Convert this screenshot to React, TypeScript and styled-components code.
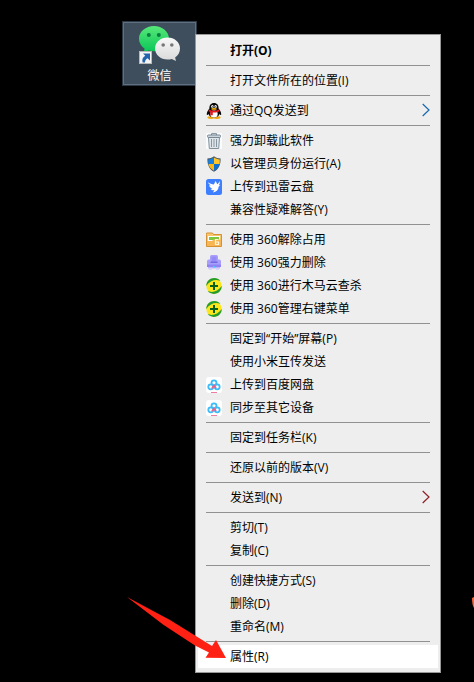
import React from "react";
import styled, { createGlobalStyle, css } from "styled-components";

const GlobalStyle = createGlobalStyle`
  * { box-sizing: border-box; }
  body {
    margin: 0;
    background: #000;
    font-family: "Open Sans", "Noto Sans CJK SC", sans-serif;
    font-size: 12px;
  }
`;

const Desktop = styled.main`
  position: relative;
  display: flex;
  align-items: flex-start;
  min-height: 100vh;
  padding: 21px 33px 9px 122px;
  overflow: hidden;
  background: #000;
`;

const Shortcut = styled.button`
  display: flex;
  flex: 0 0 75px;
  flex-direction: column;
  align-items: center;
  gap: 3px;
  height: 65px;
  padding: 3px 0 0;
  border: 2px solid #607080;
  outline: 1px solid #2b3947;
  outline-offset: -1px;
  background: #3f4e5d;
  color: #fff;
  font: inherit;
  line-height: 16px;
`;

const Menu = styled.ul`
  position: relative;
  flex: 1 1 auto;
  margin: 13px 0 0 -2px;
  padding: 4px 2px;
  border: 1px solid #989898;
  background: #eee;
  list-style: none;
`;

const Separator = styled.li`
  height: 1px;
  margin: 3px 8px;
  background: #919191;
`;

const Row = styled.li`
  position: relative;
`;

const Item = styled.button<{ $bold?: boolean; $active?: boolean }>`
  display: flex;
  align-items: center;
  gap: 8px;
  width: 100%;
  height: 23px;
  padding: 0 8px;
  border: 0;
  background: ${(p) => (p.$active ? "#fff" : "transparent")};
  color: #000;
  font: inherit;
  line-height: 18px;
  text-align: left;
  white-space: nowrap;
  ${(p) =>
    p.$bold &&
    css`
      font-weight: 700;
    `}
  &:hover {
    background: #fff;
  }
`;

const IconSlot = styled.span`
  display: flex;
  flex: 0 0 16px;
  height: 16px;
`;

const Label = styled.span`
  flex: 1;
`;

const Pointer = styled.svg`
  position: absolute;
  right: 100%;
  bottom: 0;
  margin: 0 -29px 4px 0;
  pointer-events: none;
`;

const EdgeMark = styled.svg`
  position: absolute;
  top: 597px;
  right: 0;
`;

const WeChat = () => (
  <svg width="41" height="39" viewBox="0 0 41 39" aria-hidden="true">
    <defs>
      <linearGradient id="wg" x1="0" y1="0" x2="0" y2="1">
        <stop offset="0" stopColor="#57e879" />
        <stop offset="1" stopColor="#06c556" />
      </linearGradient>
      <linearGradient id="ww" x1="0" y1="0" x2="0" y2="1">
        <stop offset="0" stopColor="#f8f8f8" />
        <stop offset="1" stopColor="#d9d9d9" />
      </linearGradient>
    </defs>
    <path d="M15 0C6.700 0 0 5.600 0 12.700c0 4 2.200 7.500 5.600 9.900L4.600 27l5.100-2.600c1.700.5 3.400.8 5.300.8 8.300 0 15-5.600 15-12.500S23.300 0 15 0z" fill="url(#wg)" />
    <circle cx="9.800" cy="9" r="2" fill="#087f3d" />
    <circle cx="19.800" cy="9" r="2" fill="#087f3d" />
    <path d="M28.500 11.500C21.500 11.500 16 16.300 16 22.500s5.500 11 12.500 11c1.600 0 3-.2 4.300-.6l4.200 2.200-.9-3.600c3-2 4.900-5.300 4.900-9 0-6.200-5.500-11-12.500-11z" fill="url(#ww)" />
    <circle cx="24.200" cy="19" r="1.800" fill="#777" />
    <circle cx="32.800" cy="19" r="1.800" fill="#777" />
    <rect x=".5" y="25.500" width="12" height="12" fill="#f4f4f4" stroke="#b9b9b9" />
    <path d="M4 27.500h7v7l-2.400-2.300C6.800 33.300 6 34.500 6 36.500H3.600c-.8-3 .1-5.300 2.700-6.800z" fill="#2463ad" />
  </svg>
);

const Svg = ({ children }: { children: React.ReactNode }) => (
  <svg width="16" height="16" viewBox="0 0 16 16" aria-hidden="true">
    {children}
  </svg>
);

const QQ = () => (
  <Svg>
    <ellipse cx="5" cy="14.600" rx="3.600" ry="1.400" fill="#f5a300" />
    <ellipse cx="11" cy="14.600" rx="3.600" ry="1.400" fill="#f5a300" />
    <path d="M8 0C4.800 0 3.300 2.300 3.400 5.500 1.800 7.500.6 9.500.8 11.500c.1 1 1 .5 1.700-.4.600 2.300 2.600 3.500 5.500 3.500s4.900-1.200 5.500-3.500c.7.900 1.600 1.400 1.700.4.200-2-1-4-2.600-6C12.700 2.300 11.200 0 8 0z" fill="#080808" />
    <ellipse cx="8" cy="11" rx="3.700" ry="3.500" fill="#fff" />
    <ellipse cx="6.400" cy="3.600" rx="1.200" ry="1.500" fill="#fff" />
    <ellipse cx="9.600" cy="3.600" rx="1.200" ry="1.500" fill="#fff" />
    <circle cx="6.700" cy="3.800" r=".6" />
    <circle cx="9.300" cy="3.800" r=".6" />
    <ellipse cx="8" cy="5.900" rx="2.800" ry=".9" fill="#f9ad08" />
    <path d="M3 6.500c3 1.700 7 1.700 10 0l.5 1.800c-2 1-4.300 1.500-6.700 1.200v2.800H4.300V9L2.500 8.200z" fill="#e71a20" />
  </Svg>
);

const Trash = () => (
  <Svg>
    <path fill="#f9fbfc" d="M0 0h16v16H0z" />
    <path d="M2.500 4.500h11L12.700 15.500H3.300z" fill="#dfe6ea" stroke="#81919c" />
    <path d="M5.500 6v8M8 6v8M10.500 6v8" stroke="#8796a0" />
    <path d="M5.500 2V.7h5V2" fill="none" stroke="#71828e" />
    <rect x="1.500" y="2" width="13" height="2.500" rx="1" fill="#cad5db" stroke="#778894" />
  </Svg>
);

const Shield = () => (
  <Svg>
    <path d="M8 .3c2 1.500 4.300 2.100 6.600 2.200C14.800 8.500 13 13 8 15.800 3 13 1.200 8.500 1.400 2.500 3.700 2.400 6 1.800 8 .3z" fill="#4b5a66" />
    <path d="M8 1.500V8H2.400c-.2-1.400-.2-2.900-.1-4.500C4.400 3.300 6.300 2.700 8 1.500z" fill="#1680e0" />
    <path d="M8 1.500V8h5.600c.2-1.400.2-2.900.1-4.500C11.600 3.300 9.700 2.700 8 1.500z" fill="#ffc52a" />
    <path d="M8 8v6.700C4.800 12.900 3 10.800 2.400 8z" fill="#fdb716" />
    <path d="M8 8v6.700c3.200-1.800 5-3.900 5.600-6.700z" fill="#0b70d0" />
  </Svg>
);

const Xunlei = () => (
  <Svg>
    <rect width="16" height="16" rx="2.500" fill="#3e7fff" />
    <path d="M1.800 3.300c2.300 1.500 4 2 6 2.200L9.700 2l1.500 3.200c1-.7 1.800-1.600 2.700-3.200-.1 2-.2 3-1 4.200l1.500.4-1.700.8c-.2 3.200-2.200 5.400-5.800 6.200l1.500-2.300c-1.800.2-3-.3-3.800-1.400l2-.3C4.400 8.800 3.500 7.900 3 6.300l1.800.3C3.400 5.700 2.400 4.600 1.800 3.300z" fill="#fff" />
  </Svg>
);

const Folder = () => (
  <Svg>
    <path d="M.5 2.500V1h6l1 1.500h8v12H.5z" fill="#f7c66b" stroke="#d59132" />
    <path d="M2 4h12v5H2z" fill="#fff" />
    <path d="M3 5h10v3H3z" fill="#7fc83d" />
    <path d="M1 9h5l1.500-1.500H15V14H1z" fill="#f7b653" />
    <path d="M12.500 7.500h-3v5h3V10h-3" fill="none" stroke="#fff5d9" strokeWidth="1.200" />
  </Svg>
);

const Printer = () => (
  <Svg>
    <path d="M4 1.500Q4 0 5.500 0h5Q12 0 12 1.500V4.500h1.200q1.800 0 1.800 1.800V12H1V6.300q0-1.800 1.800-1.800H4z" fill="#a99ffb" />
    <path d="M5.500 1.500h5v5h-5z" fill="#968bf5" />
    <path d="M4.500 6.500h7V8h-7z" fill="#7167df" />
    <path d="M1 9.500h14V12H1z" fill="#8f84f2" />
    <path d="M2 12h12v1.500H2z" fill="#bab2ff" />
    <path d="M3 13.500h3V15H3zM10 13.500h3V15h-3z" fill="#d8d3ff" />
    <path d="M7 11h2v1.500H7z" fill="#40cafa" />
  </Svg>
);

const Safe360 = () => (
  <Svg>
    <circle cx="8" cy="8" r="7.700" fill="#fbe51b" />
    <path d="M.2 8C.3 3.200 3.800.1 8.300.1c2.500 0 4.600 1 6 2.800C9.500.9 4.200 2.600.2 8z" fill="#249d2f" />
    <path d="M15.800 8c-.1 4.800-3.600 7.900-8.100 7.900-2.500 0-4.600-1-6-2.800 4.800 2 10.100.3 14.100-5.100z" fill="#249d2f" />
    <path d="M8 4v8M4 8h8" stroke="#07611b" strokeWidth="2" />
  </Svg>
);

const Baidu = () => (
  <Svg>
    <rect width="16" height="16" rx="3" fill="#fff" />
    <g fill="none" strokeWidth="1.800">
      <circle cx="8" cy="5.800" r="2.500" stroke="#3cbcf8" />
      <circle cx="4.800" cy="9.800" r="2.500" stroke="#3cbcf8" />
      <circle cx="11.200" cy="9.800" r="2.500" stroke="#3cbcf8" />
      <path d="M6 11.200 8 8.500l2 2.700" stroke="#e9648c" />
    </g>
    <path d="M5 15.500h6" stroke="#ee7da3" />
  </Svg>
);

const Chevron = ({ color }: { color: string }) => (
  <svg width="8" height="15" viewBox="0 0 8 15" aria-hidden="true">
    <path d="M.7 1 7 7 .7 13" fill="none" stroke={color} strokeWidth="1.200" />
  </svg>
);

type Entry = {
  label: string;
  Icon?: () => React.JSX.Element;
  arrow?: string;
  bold?: boolean;
  active?: boolean;
};

const groups: Entry[][] = [
  [{ label: "打开(O)", bold: true }],
  [{ label: "打开文件所在的位置(I)" }],
  [{ label: "通过QQ发送到", Icon: QQ, arrow: "#1768ad" }],
  [
    { label: "强力卸载此软件", Icon: Trash },
    { label: "以管理员身份运行(A)", Icon: Shield },
    { label: "上传到迅雷云盘", Icon: Xunlei },
    { label: "兼容性疑难解答(Y)" },
  ],
  [
    { label: "使用 360解除占用", Icon: Folder },
    { label: "使用 360强力删除", Icon: Printer },
    { label: "使用 360进行木马云查杀", Icon: Safe360 },
    { label: "使用 360管理右键菜单", Icon: Safe360 },
  ],
  [
    { label: "固定到“开始”屏幕(P)" },
    { label: "使用小米互传发送" },
    { label: "上传到百度网盘", Icon: Baidu },
    { label: "同步至其它设备", Icon: Baidu },
  ],
  [{ label: "固定到任务栏(K)" }],
  [{ label: "还原以前的版本(V)" }],
  [{ label: "发送到(N)", arrow: "#8c2026" }],
  [{ label: "剪切(T)" }, { label: "复制(C)" }],
  [{ label: "创建快捷方式(S)" }, { label: "删除(D)" }, { label: "重命名(M)" }],
  [{ label: "属性(R)", active: true }],
];

export default function App() {
  return (
    <>
      <GlobalStyle />
      <Desktop>
        <Shortcut>
          <WeChat />
          <span>微信</span>
        </Shortcut>
        <Menu role="menu">
          {groups.map((group, g) => (
            <React.Fragment key={g}>
              {g > 0 && <Separator role="separator" />}
              {group.map(({ label, Icon, arrow, bold, active }) => (
                <Row key={label} role="none">
                  <Item role="menuitem" $bold={bold} $active={active} aria-haspopup={arrow ? "menu" : undefined}>
                    <IconSlot>{Icon && <Icon />}</IconSlot>
                    <Label>{label}</Label>
                    {arrow && <Chevron color={arrow} />}
                  </Item>
                  {active && (
                    <Pointer width="100" height="68" viewBox="0 0 100 68" aria-hidden="true">
                      <path d="M0 1 43 24 85 50 89 44 99 62 78.500 61.700 82 56.500 68 49.500 36 28.500z" fill="#ff2114" />
                    </Pointer>
                  )}
                </Row>
              ))}
            </React.Fragment>
          ))}
        </Menu>
        <EdgeMark width="2" height="11" viewBox="0 0 2 11" aria-hidden="true">
          <path d="M0 1 2 0V11Q0 8 0 1z" fill="#f1663c" />
        </EdgeMark>
      </Desktop>
    </>
  );
}
